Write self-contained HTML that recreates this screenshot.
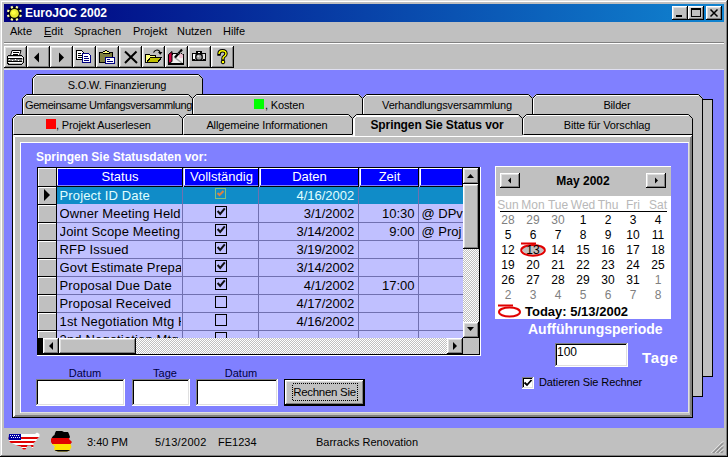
<!DOCTYPE html><html><head><meta charset="utf-8"><style>
html,body{margin:0;padding:0;width:728px;height:457px;overflow:hidden;background:#c0c0c0;}
body{position:relative;font-family:"Liberation Sans",sans-serif;}
.t{position:absolute;white-space:nowrap;}
svg{position:absolute;left:0;top:0;}
</style></head><body>
<div style="position:absolute;left:0px;top:0px;width:728px;height:457px;background:#c0c0c0;box-shadow: inset -1px -1px #000, inset 1px 1px #dfdfdf, inset -2px -2px #808080, inset 2px 2px #fff;"></div>
<div style="position:absolute;left:4px;top:4px;width:720px;height:18px;background:linear-gradient(to right,#000080 0%,#1084d0 100%);"></div>
<svg width="728" height="457" style="pointer-events:none">
<g transform="translate(14.4,13.4)"><circle r="7" fill="#000010"/><rect x="5.00" y="1.43" width="2.2" height="2.2" fill="#ffffa0" transform="rotate(22.5 6.10 2.53)"/><rect x="1.43" y="5.00" width="2.2" height="2.2" fill="#ffffa0" transform="rotate(67.5 2.53 6.10)"/><rect x="-3.63" y="5.00" width="2.2" height="2.2" fill="#ffffa0" transform="rotate(112.5 -2.53 6.10)"/><rect x="-7.20" y="1.43" width="2.2" height="2.2" fill="#ffffa0" transform="rotate(157.5 -6.10 2.53)"/><rect x="-7.20" y="-3.63" width="2.2" height="2.2" fill="#ffffa0" transform="rotate(202.5 -6.10 -2.53)"/><rect x="-3.63" y="-7.20" width="2.2" height="2.2" fill="#ffffa0" transform="rotate(247.5 -2.53 -6.10)"/><rect x="1.43" y="-7.20" width="2.2" height="2.2" fill="#ffffa0" transform="rotate(292.5 2.53 -6.10)"/><rect x="5.00" y="-3.63" width="2.2" height="2.2" fill="#ffffa0" transform="rotate(337.5 6.10 -2.53)"/><circle r="5" fill="#000"/><circle r="4.4" fill="#e8e830"/><circle cx="-0.8" cy="-0.8" r="2.2" fill="#ffff40"/></g></svg>
<div class="t" style="left:25px;top:5.84px;font-size:12px;line-height:14px;color:#fff;font-weight:700;">EuroJOC 2002</div>
<div style="position:absolute;left:672px;top:6px;width:16px;height:14px;background:#c0c0c0;box-shadow: inset -1px -1px #000, inset 1px 1px #fff, inset -2px -2px #808080, inset 2px 2px #dfdfdf;"></div>
<div style="position:absolute;left:688px;top:6px;width:16px;height:14px;background:#c0c0c0;box-shadow: inset -1px -1px #000, inset 1px 1px #fff, inset -2px -2px #808080, inset 2px 2px #dfdfdf;"></div>
<div style="position:absolute;left:706px;top:6px;width:16px;height:14px;background:#c0c0c0;box-shadow: inset -1px -1px #000, inset 1px 1px #fff, inset -2px -2px #808080, inset 2px 2px #dfdfdf;"></div>
<svg width="728" height="457">
<rect x="676" y="15" width="6" height="2" fill="#000"/>
<rect x="691.5" y="8.5" width="9" height="8" fill="none" stroke="#000"/>
<rect x="691" y="9" width="10" height="1" fill="#000"/>
<path d="M710.5 9.5 L717.5 16.5 M717.5 9.5 L710.5 16.5" stroke="#000" stroke-width="1.5"/>
</svg>
<div class="t" style="left:10px;top:24.69px;font-size:11px;line-height:13px;color:#000;">Akte</div>
<div class="t" style="left:44px;top:24.69px;font-size:11px;line-height:13px;color:#000;"><u>E</u>dit</div>
<div class="t" style="left:74px;top:24.69px;font-size:11px;line-height:13px;color:#000;">Sprachen</div>
<div class="t" style="left:133px;top:24.69px;font-size:11px;line-height:13px;color:#000;">Projekt</div>
<div class="t" style="left:177px;top:24.69px;font-size:11px;line-height:13px;color:#000;">Nutzen</div>
<div class="t" style="left:223px;top:24.69px;font-size:11px;line-height:13px;color:#000;">Hilfe</div>
<div style="position:absolute;left:4px;top:42px;width:720px;height:1px;background:#808080;"></div>
<div style="position:absolute;left:4px;top:43px;width:720px;height:1px;background:#fff;"></div>
<div style="position:absolute;left:4px;top:46px;width:23px;height:22px;background:#c0c0c0;box-shadow: inset -1px -1px #000, inset 1px 1px #fff, inset -2px -2px #808080, inset 2px 2px #dfdfdf;"></div>
<div style="position:absolute;left:27px;top:46px;width:23px;height:22px;background:#c0c0c0;box-shadow: inset -1px -1px #000, inset 1px 1px #fff, inset -2px -2px #808080, inset 2px 2px #dfdfdf;"></div>
<div style="position:absolute;left:50px;top:46px;width:23px;height:22px;background:#c0c0c0;box-shadow: inset -1px -1px #000, inset 1px 1px #fff, inset -2px -2px #808080, inset 2px 2px #dfdfdf;"></div>
<div style="position:absolute;left:73px;top:46px;width:23px;height:22px;background:#c0c0c0;box-shadow: inset -1px -1px #000, inset 1px 1px #fff, inset -2px -2px #808080, inset 2px 2px #dfdfdf;"></div>
<div style="position:absolute;left:96px;top:46px;width:23px;height:22px;background:#c0c0c0;box-shadow: inset -1px -1px #000, inset 1px 1px #fff, inset -2px -2px #808080, inset 2px 2px #dfdfdf;"></div>
<div style="position:absolute;left:119px;top:46px;width:23px;height:22px;background:#c0c0c0;box-shadow: inset -1px -1px #000, inset 1px 1px #fff, inset -2px -2px #808080, inset 2px 2px #dfdfdf;"></div>
<div style="position:absolute;left:142px;top:46px;width:23px;height:22px;background:#c0c0c0;box-shadow: inset -1px -1px #000, inset 1px 1px #fff, inset -2px -2px #808080, inset 2px 2px #dfdfdf;"></div>
<div style="position:absolute;left:165px;top:46px;width:23px;height:22px;background:#c0c0c0;box-shadow: inset -1px -1px #000, inset 1px 1px #fff, inset -2px -2px #808080, inset 2px 2px #dfdfdf;"></div>
<div style="position:absolute;left:188px;top:46px;width:23px;height:22px;background:#c0c0c0;box-shadow: inset -1px -1px #000, inset 1px 1px #fff, inset -2px -2px #808080, inset 2px 2px #dfdfdf;"></div>
<div style="position:absolute;left:211px;top:46px;width:23px;height:22px;background:#c0c0c0;box-shadow: inset -1px -1px #000, inset 1px 1px #fff, inset -2px -2px #808080, inset 2px 2px #dfdfdf;"></div>
<div style="position:absolute;left:4px;top:69px;width:720px;height:359px;background:#8080ff;box-shadow:inset 0 1px #e0e0f0;"></div>
<svg width="728" height="457" shape-rendering="crispEdges">
<!-- printer -->
<g>
<path d="M12 50.5 h9 l-1.5 5 h-9 z" fill="#fff" stroke="#000" shape-rendering="auto"/>
<rect x="13" y="52" width="6" height="1" fill="#000"/>
<rect x="12.5" y="54" width="5.5" height="1" fill="#000"/>
<path d="M8.5 55.5 h13 l1.5 1.5 v6 l-1 1 h-13.5 l-1.5 -1.5 v-5.5 z" fill="#c0c0c0" stroke="#000"/>
<rect x="8" y="57" width="14" height="1" fill="#fff"/>
<rect x="8" y="58" width="14" height="1" fill="#000"/>
<rect x="8" y="59" width="14" height="2" fill="#808080"/>
<rect x="9" y="59" width="1" height="1" fill="#fff"/><rect x="12" y="60" width="1" height="1" fill="#fff"/><rect x="15" y="59" width="1" height="1" fill="#fff"/><rect x="18" y="60" width="1" height="1" fill="#fff"/>
<rect x="8" y="61" width="14" height="1" fill="#000"/>
<rect x="8" y="62" width="14" height="1" fill="#fff"/>
<rect x="22" y="57" width="1" height="1" fill="#fff"/><rect x="22" y="60" width="1" height="1" fill="#fff"/>
</g>
<!-- left arrow -->
<path d="M34 57.5 L39 52.5 L39 62.5 Z" fill="#000" shape-rendering="auto"/>
<!-- right arrow -->
<path d="M64 57.5 L59 52.5 L59 62.5 Z" fill="#000" shape-rendering="auto"/>
<!-- copy -->
<path d="M76.5 50.5 h5 l2 2 v7 h-7 z" fill="#fff" stroke="#000"/>
<rect x="78" y="53" width="3" height="1" fill="#000"/><rect x="78" y="55" width="4" height="1" fill="#000"/><rect x="78" y="57" width="4" height="1" fill="#000"/>
<path d="M82.5 53.5 h6 l2 2 v7 h-8 z" fill="#fff" stroke="#000080"/>
<rect x="84" y="56" width="4" height="1" fill="#000080"/><rect x="84" y="58" width="5" height="1" fill="#000080"/><rect x="84" y="60" width="5" height="1" fill="#000080"/>
<!-- paste -->
<rect x="99.5" y="52.5" width="13" height="10" fill="#808040" stroke="#000"/>
<path d="M103.5 53.5 h6 v-1 l-1 -1 h-1 l-1 -1 h-1 l-1 1 h-1 l-1 1 z" fill="#ffff80" stroke="#000"/>
<rect x="105.5" y="57.5" width="9" height="6" fill="#fff" stroke="#000080"/>
<rect x="107" y="59" width="3" height="1" fill="#000080"/><rect x="107" y="61" width="6" height="1" fill="#000080"/>
<!-- delete X -->
<path d="M125 51.5 L137 63 M136.5 51.5 L125 63" stroke="#000" stroke-width="2" shape-rendering="auto"/>
<!-- open folder -->
<path d="M145.5 54.5 h4 l1 1 h5 v2 h-5 l-4 5 h-1 z" fill="#ffff80" stroke="#000"/>
<path d="M146.5 62.5 l4 -5 h11 l-4 5 z" fill="#c0c000" stroke="#000"/>
<path d="M153.5 52.5 q1.5 -2.5 3.5 -2.5 q2.5 0 3 2.5" fill="none" stroke="#000" stroke-width="1.2" shape-rendering="auto"/>
<path d="M158 52 h4.5 l-2.3 2.8 z" fill="#000" shape-rendering="auto"/>
<!-- red book/pen -->
<path d="M172.5 53.5 h4 l1 1 h3 l1 -1 l2 1.5 v9 h-14 z" fill="#f0f0f0" stroke="#000"/>
<path d="M174 57 L182 63" stroke="#a0a0a0" stroke-width="1.5" shape-rendering="auto"/>
<rect x="168" y="63" width="16" height="2" fill="#000"/>
<path d="M168.5 54.5 l3.5 -3 v10 l-3.5 2 z" fill="#d00040" stroke="#000" shape-rendering="auto"/>
<circle cx="181" cy="56" r="2.2" fill="#f0c0d0" shape-rendering="auto"/>
<path d="M175 57.5 L182 49.5" stroke="#000" stroke-width="2.2" shape-rendering="auto"/>
<path d="M178.5 53.5 l1 1 M180 51.8 l1 1" stroke="#c0c0c0" stroke-width="0.8" shape-rendering="auto"/>
<!-- camera -->
<rect x="192" y="53" width="14" height="8" rx="1" fill="#000"/>
<rect x="196" y="51" width="6" height="3" fill="#000"/>
<rect x="198" y="52" width="2" height="1" fill="#fff"/>
<rect x="193" y="54" width="2" height="5" fill="#fff"/>
<rect x="203" y="54" width="2" height="5" fill="#e0e0e0"/>
<rect x="195" y="54" width="8" height="6" fill="#808080"/>
<circle cx="199" cy="57" r="3.2" fill="#a0a0a0" stroke="#000" stroke-width="1.2" shape-rendering="auto"/>
<circle cx="198.3" cy="56.3" r="1" fill="#e0e0e0" shape-rendering="auto"/>
<!-- question -->
<path d="M219 54 q0 -3.2 3.5 -3.2 q3.5 0 3.5 3 q0 1.8 -2 2.8 q-1 .6 -1 1.8 v1" fill="none" stroke="#000" stroke-width="3.4" stroke-linecap="square" shape-rendering="auto"/>
<path d="M219 54 q0 -3.2 3.5 -3.2 q3.5 0 3.5 3 q0 1.8 -2 2.8 q-1 .6 -1 1.8 v1" fill="none" stroke="#ffff00" stroke-width="1.4" stroke-linecap="butt" shape-rendering="auto"/>
<circle cx="223" cy="62" r="1.8" fill="#ffff00" stroke="#000" stroke-width="1" shape-rendering="auto"/>
</svg>
<svg width="728" height="457">
<rect x="702.5" y="99.5" width="10" height="277" fill="#c0c0c0" stroke="#000"/>
<rect x="692.5" y="114.5" width="10" height="282" fill="#c0c0c0" stroke="#000"/>
<path d="M32 98 V78 L36 74 H199 L203 78 V98 Z" fill="#c0c0c0"/>
<path d="M32.5 98.5 V78.5 L36.5 74.5 H198.5 L202.5 78.5 V98.5" fill="none" stroke="#000"/>
<path d="M33.5 98.5 V78.5 L36.5 75.5 H198.5" fill="none" stroke="#fff"/>
<path d="M22 118 V98 L26 94 H189 L193 98 V118 Z" fill="#c0c0c0"/>
<path d="M22.5 118.5 V98.5 L26.5 94.5 H188.5 L192.5 98.5 V118.5" fill="none" stroke="#000"/>
<path d="M23.5 118.5 V98.5 L26.5 95.5 H188.5" fill="none" stroke="#fff"/>
<path d="M192 118 V98 L196 94 H359 L363 98 V118 Z" fill="#c0c0c0"/>
<path d="M192.5 118.5 V98.5 L196.5 94.5 H358.5 L362.5 98.5 V118.5" fill="none" stroke="#000"/>
<path d="M193.5 118.5 V98.5 L196.5 95.5 H358.5" fill="none" stroke="#fff"/>
<path d="M362 118 V98 L366 94 H529 L533 98 V118 Z" fill="#c0c0c0"/>
<path d="M362.5 118.5 V98.5 L366.5 94.5 H528.5 L532.5 98.5 V118.5" fill="none" stroke="#000"/>
<path d="M363.5 118.5 V98.5 L366.5 95.5 H528.5" fill="none" stroke="#fff"/>
<path d="M532 118 V98 L536 94 H699 L703 98 V118 Z" fill="#c0c0c0"/>
<path d="M532.5 118.5 V98.5 L536.5 94.5 H698.5 L702.5 98.5 V118.5" fill="none" stroke="#000"/>
<path d="M533.5 118.5 V98.5 L536.5 95.5 H698.5" fill="none" stroke="#fff"/>
<rect x="12.5" y="134.5" width="680" height="283" fill="#c0c0c0" stroke="#000"/>
<path d="M13.5 417 V135.5 H692 M14.5 417 V136.5 H692" stroke="#fff" fill="none"/>
<path d="M690.5 137 V415.5 H15 M691.5 136 V416.5 H14" stroke="#808080" fill="none"/>
<path d="M12 134 V118 L16 114 H179 L183 118 V134 Z" fill="#c0c0c0"/>
<path d="M12.5 134.5 V118.5 L16.5 114.5 H178.5 L182.5 118.5 V134.5" fill="none" stroke="#000"/>
<path d="M13.5 134.5 V118.5 L16.5 115.5 H178.5" fill="none" stroke="#fff"/>
<path d="M182 134 V118 L186 114 H349 L353 118 V134 Z" fill="#c0c0c0"/>
<path d="M182.5 134.5 V118.5 L186.5 114.5 H348.5 L352.5 118.5 V134.5" fill="none" stroke="#000"/>
<path d="M183.5 134.5 V118.5 L186.5 115.5 H348.5" fill="none" stroke="#fff"/>
<path d="M522 134 V118 L526 114 H689 L693 118 V134 Z" fill="#c0c0c0"/>
<path d="M522.5 134.5 V118.5 L526.5 114.5 H688.5 L692.5 118.5 V134.5" fill="none" stroke="#000"/>
<path d="M523.5 134.5 V118.5 L526.5 115.5 H688.5" fill="none" stroke="#fff"/>
<path d="M352.5 136 V118.5 L356.5 114.5 H518.5 L522.5 118.5 V136 Z" fill="#c0c0c0"/>
<path d="M352.5 134 V118.5 L356.5 114.5 H518.5 L522.5 118.5 V134.5" fill="none" stroke="#000"/>
<path d="M353.5 137 V118.5 L356.5 115.5 H518.5 M354.5 137 V118.5 L356.5 116.5 H518.5" fill="none" stroke="#fff"/>
<rect x="20.5" y="142.5" width="668" height="270" fill="#8080ff" stroke="#fff"/>
<path d="M688.5 143 V412.5 H21" stroke="#e0e0e0" fill="none"/>
</svg>
<div class="t" style="left:32px;top:78.69px;font-size:11px;line-height:13px;color:#000;letter-spacing:-0.15px;width:170px;text-align:center;">S.O.W. Finanzierung</div>
<div class="t" style="left:25px;top:98.69px;font-size:11px;line-height:13px;color:#000;letter-spacing:-0.4px;width:167px;overflow:hidden;">Gemeinsame Umfangsversammlung</div>
<div class="t" style="left:265px;top:98.69px;font-size:11px;line-height:13px;color:#000;letter-spacing:-0.15px;">, Kosten</div>
<div style="position:absolute;left:254px;top:99px;width:10px;height:10px;background:#00ff00;"></div>
<div class="t" style="left:362px;top:98.69px;font-size:11px;line-height:13px;color:#000;letter-spacing:-0.15px;width:170px;text-align:center;">Verhandlungsversammlung</div>
<div class="t" style="left:532px;top:98.69px;font-size:11px;line-height:13px;color:#000;letter-spacing:-0.15px;width:170px;text-align:center;">Bilder</div>
<div style="position:absolute;left:46px;top:119px;width:10px;height:10px;background:#ff0000;"></div>
<div class="t" style="left:56px;top:118.69px;font-size:11px;line-height:13px;color:#000;letter-spacing:-0.15px;">, Projekt Auserlesen</div>
<div class="t" style="left:182px;top:118.69px;font-size:11px;line-height:13px;color:#000;letter-spacing:-0.15px;width:170px;text-align:center;">Allgemeine Informationen</div>
<div class="t" style="left:352px;top:117.84px;font-size:12px;line-height:14px;color:#000;font-weight:700;letter-spacing:-0.1px;width:170px;text-align:center;">Springen Sie Status vor</div>
<div class="t" style="left:522px;top:118.69px;font-size:11px;line-height:13px;color:#000;letter-spacing:-0.15px;width:170px;text-align:center;">Bitte für Vorschlag</div>
<div class="t" style="left:36px;top:149.84px;font-size:12px;line-height:14px;color:#fff;font-weight:700;">Springen Sie Statusdaten vor:</div>
<svg width="728" height="457" shape-rendering="crispEdges">
<rect x="37" y="167" width="443" height="188" fill="#000"/>
<rect x="37" y="355" width="444" height="1" fill="#fff"/>
<rect x="480" y="167" width="1" height="189" fill="#fff"/>
<rect x="38" y="168" width="425" height="170" fill="#c0c0ff"/>
<rect x="57" y="187" width="406" height="17" fill="#108cc8"/>
<rect x="38" y="187" width="18" height="18" fill="#c0c0c0"/>
<rect x="38" y="187" width="18" height="1" fill="#fff"/>
<rect x="38" y="187" width="1" height="18" fill="#fff"/>
<rect x="38" y="204" width="18" height="1" fill="#000"/>
<rect x="38" y="205" width="18" height="18" fill="#c0c0c0"/>
<rect x="38" y="205" width="18" height="1" fill="#fff"/>
<rect x="38" y="205" width="1" height="18" fill="#fff"/>
<rect x="38" y="222" width="18" height="1" fill="#000"/>
<rect x="56" y="222" width="407" height="1" fill="#7070b0"/>
<rect x="38" y="223" width="18" height="18" fill="#c0c0c0"/>
<rect x="38" y="223" width="18" height="1" fill="#fff"/>
<rect x="38" y="223" width="1" height="18" fill="#fff"/>
<rect x="38" y="240" width="18" height="1" fill="#000"/>
<rect x="56" y="240" width="407" height="1" fill="#7070b0"/>
<rect x="38" y="241" width="18" height="18" fill="#c0c0c0"/>
<rect x="38" y="241" width="18" height="1" fill="#fff"/>
<rect x="38" y="241" width="1" height="18" fill="#fff"/>
<rect x="38" y="258" width="18" height="1" fill="#000"/>
<rect x="56" y="258" width="407" height="1" fill="#7070b0"/>
<rect x="38" y="259" width="18" height="18" fill="#c0c0c0"/>
<rect x="38" y="259" width="18" height="1" fill="#fff"/>
<rect x="38" y="259" width="1" height="18" fill="#fff"/>
<rect x="38" y="276" width="18" height="1" fill="#000"/>
<rect x="56" y="276" width="407" height="1" fill="#7070b0"/>
<rect x="38" y="277" width="18" height="18" fill="#c0c0c0"/>
<rect x="38" y="277" width="18" height="1" fill="#fff"/>
<rect x="38" y="277" width="1" height="18" fill="#fff"/>
<rect x="38" y="294" width="18" height="1" fill="#000"/>
<rect x="56" y="294" width="407" height="1" fill="#7070b0"/>
<rect x="38" y="295" width="18" height="18" fill="#c0c0c0"/>
<rect x="38" y="295" width="18" height="1" fill="#fff"/>
<rect x="38" y="295" width="1" height="18" fill="#fff"/>
<rect x="38" y="312" width="18" height="1" fill="#000"/>
<rect x="56" y="312" width="407" height="1" fill="#7070b0"/>
<rect x="38" y="313" width="18" height="18" fill="#c0c0c0"/>
<rect x="38" y="313" width="18" height="1" fill="#fff"/>
<rect x="38" y="313" width="1" height="18" fill="#fff"/>
<rect x="38" y="330" width="18" height="1" fill="#000"/>
<rect x="56" y="330" width="407" height="1" fill="#7070b0"/>
<rect x="38" y="331" width="18" height="7" fill="#c0c0c0"/>
<rect x="38" y="331" width="18" height="1" fill="#fff"/>
<rect x="38" y="331" width="1" height="7" fill="#fff"/>
<rect x="38" y="348" width="18" height="1" fill="#000"/>
<rect x="56" y="348" width="407" height="1" fill="#7070b0"/>
<rect x="56" y="168" width="1" height="170" fill="#000"/>
<rect x="182" y="187" width="1" height="151" fill="#7070b0"/>
<rect x="258" y="187" width="1" height="151" fill="#7070b0"/>
<rect x="358" y="187" width="1" height="151" fill="#7070b0"/>
<rect x="418" y="187" width="1" height="151" fill="#7070b0"/>
<rect x="38" y="168" width="18" height="19" fill="#c0c0c0"/>
<rect x="38" y="168" width="18" height="1" fill="#fff"/>
<rect x="38" y="168" width="1" height="19" fill="#fff"/>
<rect x="38" y="186" width="18" height="1" fill="#000"/>
<rect x="57" y="168" width="126" height="19" fill="#0000ff"/>
<rect x="57" y="168" width="126" height="1" fill="#fff"/>
<rect x="57" y="168" width="1" height="19" fill="#fff"/>
<rect x="182" y="168" width="1" height="19" fill="#000"/>
<rect x="57" y="186" width="126" height="1" fill="#000"/>
<rect x="57" y="185" width="125" height="1" fill="#8080ff"/>
<rect x="184" y="168" width="75" height="19" fill="#0000ff"/>
<rect x="184" y="168" width="75" height="1" fill="#fff"/>
<rect x="184" y="168" width="1" height="19" fill="#fff"/>
<rect x="258" y="168" width="1" height="19" fill="#000"/>
<rect x="184" y="186" width="75" height="1" fill="#000"/>
<rect x="184" y="185" width="74" height="1" fill="#8080ff"/>
<rect x="260" y="168" width="99" height="19" fill="#0000ff"/>
<rect x="260" y="168" width="99" height="1" fill="#fff"/>
<rect x="260" y="168" width="1" height="19" fill="#fff"/>
<rect x="358" y="168" width="1" height="19" fill="#000"/>
<rect x="260" y="186" width="99" height="1" fill="#000"/>
<rect x="260" y="185" width="98" height="1" fill="#8080ff"/>
<rect x="360" y="168" width="59" height="19" fill="#0000ff"/>
<rect x="360" y="168" width="59" height="1" fill="#fff"/>
<rect x="360" y="168" width="1" height="19" fill="#fff"/>
<rect x="418" y="168" width="1" height="19" fill="#000"/>
<rect x="360" y="186" width="59" height="1" fill="#000"/>
<rect x="360" y="185" width="58" height="1" fill="#8080ff"/>
<rect x="420" y="168" width="43" height="19" fill="#0000ff"/>
<rect x="420" y="168" width="43" height="1" fill="#fff"/>
<rect x="420" y="168" width="1" height="19" fill="#fff"/>
<rect x="462" y="168" width="1" height="19" fill="#000"/>
<rect x="420" y="186" width="43" height="1" fill="#000"/>
<rect x="420" y="185" width="42" height="1" fill="#8080ff"/>
<path d="M44 189 L44 201 L50 195 Z" fill="#000" shape-rendering="auto"/>
<rect x="215.5" y="188.5" width="10" height="10" fill="none" stroke="#80c080"/>
<path d="M217.5 193 l2 2 l4 -4" fill="none" stroke="#e08040" stroke-width="2" shape-rendering="auto"/>
<rect x="215.5" y="206.5" width="11" height="11" fill="#fff" stroke="#000"/>
<rect x="216" y="207" width="10" height="10" fill="#c0c0ff"/>
<path d="M217.6 211 l2.6 3 l4.6 -5.6" fill="none" stroke="#101010" stroke-width="2" shape-rendering="auto"/>
<rect x="215.5" y="224.5" width="11" height="11" fill="#fff" stroke="#000"/>
<rect x="216" y="225" width="10" height="10" fill="#c0c0ff"/>
<path d="M217.6 229 l2.6 3 l4.6 -5.6" fill="none" stroke="#101010" stroke-width="2" shape-rendering="auto"/>
<rect x="215.5" y="242.5" width="11" height="11" fill="#fff" stroke="#000"/>
<rect x="216" y="243" width="10" height="10" fill="#c0c0ff"/>
<path d="M217.6 247 l2.6 3 l4.6 -5.6" fill="none" stroke="#101010" stroke-width="2" shape-rendering="auto"/>
<rect x="215.5" y="260.5" width="11" height="11" fill="#fff" stroke="#000"/>
<rect x="216" y="261" width="10" height="10" fill="#c0c0ff"/>
<path d="M217.6 265 l2.6 3 l4.6 -5.6" fill="none" stroke="#101010" stroke-width="2" shape-rendering="auto"/>
<rect x="215.5" y="278.5" width="11" height="11" fill="#fff" stroke="#000"/>
<rect x="216" y="279" width="10" height="10" fill="#c0c0ff"/>
<path d="M217.6 283 l2.6 3 l4.6 -5.6" fill="none" stroke="#101010" stroke-width="2" shape-rendering="auto"/>
<rect x="215.5" y="296.5" width="11" height="11" fill="#fff" stroke="#000"/>
<rect x="216" y="297" width="10" height="10" fill="#c0c0ff"/>
<rect x="215.5" y="314.5" width="11" height="11" fill="#fff" stroke="#000"/>
<rect x="216" y="315" width="10" height="10" fill="#c0c0ff"/>
<rect x="215.5" y="332.5" width="11" height="11" fill="none" stroke="#000"/>
<rect x="463" y="168" width="16" height="170" fill="url(#dither)"/>
<rect x="37" y="338" width="426" height="16" fill="url(#dither)"/>
<rect x="463" y="338" width="16" height="16" fill="#c0c0c0"/>
<defs><pattern id="dither" width="2" height="2" patternUnits="userSpaceOnUse"><rect width="2" height="2" fill="#c0c0c0"/><rect width="1" height="1" fill="#fff"/><rect x="1" y="1" width="1" height="1" fill="#fff"/></pattern></defs>
<rect x="463" y="168" width="16" height="16" fill="#000"/>
<rect x="463" y="168" width="15" height="15" fill="#fff"/>
<rect x="464" y="169" width="14" height="14" fill="#808080"/>
<rect x="464" y="169" width="13" height="13" fill="#dfdfdf"/>
<rect x="465" y="170" width="12" height="12" fill="#c0c0c0"/>
<rect x="463" y="184" width="16" height="65" fill="#000"/>
<rect x="463" y="184" width="15" height="64" fill="#fff"/>
<rect x="464" y="185" width="14" height="63" fill="#808080"/>
<rect x="464" y="185" width="13" height="62" fill="#dfdfdf"/>
<rect x="465" y="186" width="12" height="61" fill="#c0c0c0"/>
<rect x="463" y="322" width="16" height="16" fill="#000"/>
<rect x="463" y="322" width="15" height="15" fill="#fff"/>
<rect x="464" y="323" width="14" height="14" fill="#808080"/>
<rect x="464" y="323" width="13" height="13" fill="#dfdfdf"/>
<rect x="465" y="324" width="12" height="12" fill="#c0c0c0"/>
<rect x="37" y="338" width="6" height="16" fill="#000"/>
<rect x="43" y="338" width="16" height="16" fill="#000"/>
<rect x="43" y="338" width="15" height="15" fill="#fff"/>
<rect x="44" y="339" width="14" height="14" fill="#808080"/>
<rect x="44" y="339" width="13" height="13" fill="#dfdfdf"/>
<rect x="45" y="340" width="12" height="12" fill="#c0c0c0"/>
<rect x="59" y="338" width="77" height="16" fill="#000"/>
<rect x="59" y="338" width="76" height="15" fill="#fff"/>
<rect x="60" y="339" width="75" height="14" fill="#808080"/>
<rect x="60" y="339" width="74" height="13" fill="#dfdfdf"/>
<rect x="61" y="340" width="73" height="12" fill="#c0c0c0"/>
<rect x="447" y="338" width="16" height="16" fill="#000"/>
<rect x="447" y="338" width="15" height="15" fill="#fff"/>
<rect x="448" y="339" width="14" height="14" fill="#808080"/>
<rect x="448" y="339" width="13" height="13" fill="#dfdfdf"/>
<rect x="449" y="340" width="12" height="12" fill="#c0c0c0"/>
<path d="M467 178 h7 l-3.5 -4 z" fill="#000" shape-rendering="auto"/>
<path d="M467 327 h7 l-3.5 4 z" fill="#000" shape-rendering="auto"/>
<path d="M49 346 l4 -4 v8 z" fill="#000" shape-rendering="auto"/>
<path d="M457 346 l-4 -4 v8 z" fill="#000" shape-rendering="auto"/>
</svg>
<div class="t" style="left:57px;top:169.00px;font-size:13px;line-height:15px;color:#fff;width:126px;text-align:center;">Status</div>
<div class="t" style="left:184px;top:169.00px;font-size:13px;line-height:15px;color:#fff;width:75px;text-align:center;">Vollständig</div>
<div class="t" style="left:260px;top:169.00px;font-size:13px;line-height:15px;color:#fff;width:99px;text-align:center;">Daten</div>
<div class="t" style="left:360px;top:169.00px;font-size:13px;line-height:15px;color:#fff;width:59px;text-align:center;">Zeit</div>
<div style="position:absolute;left:57px;top:186px;width:407px;height:152px;overflow:hidden">
<div class="t" style="left:2.5px;top:1.50px;font-size:13px;line-height:15px;color:#e0ffff;letter-spacing:0.15px;width:121px;overflow:hidden;">Project ID Date</div>
<div class="t" style="left:197px;top:1.50px;font-size:13px;line-height:15px;color:#e0ffff;width:100.3px;text-align:right;">4/16/2002</div>
<div class="t" style="left:297px;top:1.50px;font-size:13px;line-height:15px;color:#e0ffff;width:60.5px;text-align:right;"></div>
<div class="t" style="left:364.5px;top:1.50px;font-size:13px;line-height:15px;color:#e0ffff;width:42px;overflow:hidden;"></div>
<div class="t" style="left:2.5px;top:19.50px;font-size:13px;line-height:15px;color:#000;letter-spacing:0.15px;width:121px;overflow:hidden;">Owner Meeting Held</div>
<div class="t" style="left:197px;top:19.50px;font-size:13px;line-height:15px;color:#000;width:100.3px;text-align:right;">3/1/2002</div>
<div class="t" style="left:297px;top:19.50px;font-size:13px;line-height:15px;color:#000;width:60.5px;text-align:right;">10:30</div>
<div class="t" style="left:364.5px;top:19.50px;font-size:13px;line-height:15px;color:#000;width:42px;overflow:hidden;">@ DPv</div>
<div class="t" style="left:2.5px;top:37.50px;font-size:13px;line-height:15px;color:#000;letter-spacing:0.15px;width:121px;overflow:hidden;">Joint Scope Meeting</div>
<div class="t" style="left:197px;top:37.50px;font-size:13px;line-height:15px;color:#000;width:100.3px;text-align:right;">3/14/2002</div>
<div class="t" style="left:297px;top:37.50px;font-size:13px;line-height:15px;color:#000;width:60.5px;text-align:right;">9:00</div>
<div class="t" style="left:364.5px;top:37.50px;font-size:13px;line-height:15px;color:#000;width:42px;overflow:hidden;">@ Proj</div>
<div class="t" style="left:2.5px;top:55.50px;font-size:13px;line-height:15px;color:#000;letter-spacing:0.15px;width:121px;overflow:hidden;">RFP Issued</div>
<div class="t" style="left:197px;top:55.50px;font-size:13px;line-height:15px;color:#000;width:100.3px;text-align:right;">3/19/2002</div>
<div class="t" style="left:297px;top:55.50px;font-size:13px;line-height:15px;color:#000;width:60.5px;text-align:right;"></div>
<div class="t" style="left:364.5px;top:55.50px;font-size:13px;line-height:15px;color:#000;width:42px;overflow:hidden;"></div>
<div class="t" style="left:2.5px;top:73.50px;font-size:13px;line-height:15px;color:#000;letter-spacing:0.15px;width:121px;overflow:hidden;">Govt Estimate Prepared</div>
<div class="t" style="left:197px;top:73.50px;font-size:13px;line-height:15px;color:#000;width:100.3px;text-align:right;">3/14/2002</div>
<div class="t" style="left:297px;top:73.50px;font-size:13px;line-height:15px;color:#000;width:60.5px;text-align:right;"></div>
<div class="t" style="left:364.5px;top:73.50px;font-size:13px;line-height:15px;color:#000;width:42px;overflow:hidden;"></div>
<div class="t" style="left:2.5px;top:91.50px;font-size:13px;line-height:15px;color:#000;letter-spacing:0.15px;width:121px;overflow:hidden;">Proposal Due Date</div>
<div class="t" style="left:197px;top:91.50px;font-size:13px;line-height:15px;color:#000;width:100.3px;text-align:right;">4/1/2002</div>
<div class="t" style="left:297px;top:91.50px;font-size:13px;line-height:15px;color:#000;width:60.5px;text-align:right;">17:00</div>
<div class="t" style="left:364.5px;top:91.50px;font-size:13px;line-height:15px;color:#000;width:42px;overflow:hidden;"></div>
<div class="t" style="left:2.5px;top:109.50px;font-size:13px;line-height:15px;color:#000;letter-spacing:0.15px;width:121px;overflow:hidden;">Proposal Received</div>
<div class="t" style="left:197px;top:109.50px;font-size:13px;line-height:15px;color:#000;width:100.3px;text-align:right;">4/17/2002</div>
<div class="t" style="left:297px;top:109.50px;font-size:13px;line-height:15px;color:#000;width:60.5px;text-align:right;"></div>
<div class="t" style="left:364.5px;top:109.50px;font-size:13px;line-height:15px;color:#000;width:42px;overflow:hidden;"></div>
<div class="t" style="left:2.5px;top:127.50px;font-size:13px;line-height:15px;color:#000;letter-spacing:0.15px;width:121px;overflow:hidden;">1st Negotiation Mtg Held</div>
<div class="t" style="left:197px;top:127.50px;font-size:13px;line-height:15px;color:#000;width:100.3px;text-align:right;">4/16/2002</div>
<div class="t" style="left:297px;top:127.50px;font-size:13px;line-height:15px;color:#000;width:60.5px;text-align:right;"></div>
<div class="t" style="left:364.5px;top:127.50px;font-size:13px;line-height:15px;color:#000;width:42px;overflow:hidden;"></div>
<div class="t" style="left:2.5px;top:145.50px;font-size:13px;line-height:15px;color:#000;letter-spacing:0.15px;width:121px;overflow:hidden;">2nd Negotiation Mtg Held</div>
<div class="t" style="left:197px;top:145.50px;font-size:13px;line-height:15px;color:#000;width:100.3px;text-align:right;"></div>
<div class="t" style="left:297px;top:145.50px;font-size:13px;line-height:15px;color:#000;width:60.5px;text-align:right;"></div>
<div class="t" style="left:364.5px;top:145.50px;font-size:13px;line-height:15px;color:#000;width:42px;overflow:hidden;"></div>
</div>
<div style="position:absolute;left:495px;top:166px;width:176px;height:153px;background:#fff;"></div>
<div style="position:absolute;left:496px;top:167px;width:175px;height:29px;background:#c0c0c0;"></div>
<div style="position:absolute;left:500px;top:173px;width:20px;height:15px;background:#c0c0c0;box-shadow: inset -1px -1px #000, inset 1px 1px #fff, inset -2px -2px #808080, inset 2px 2px #dfdfdf;"></div>
<div style="position:absolute;left:646px;top:173px;width:20px;height:15px;background:#c0c0c0;box-shadow: inset -1px -1px #000, inset 1px 1px #fff, inset -2px -2px #808080, inset 2px 2px #dfdfdf;"></div>
<svg width="728" height="457">
<path d="M508 180.5 l3 -3 v6 z" fill="#000"/>
<path d="M658 180.5 l-3 -3 v6 z" fill="#000"/>
<rect x="500" y="211" width="167" height="1" fill="#000"/>
<ellipse cx="533" cy="250" rx="10.5" ry="4.8" fill="#c0c0c0"/>
<ellipse cx="533" cy="250.3" rx="11.8" ry="5.4" fill="none" stroke="#e00000" stroke-width="2"/>
<path d="M521 243.5 H536" stroke="#e00000" stroke-width="2"/>
<ellipse cx="509.5" cy="312" rx="10.5" ry="4.6" fill="none" stroke="#e00000" stroke-width="2"/>
<path d="M498 305.5 H513" stroke="#e00000" stroke-width="2"/>
</svg>
<div class="t" style="left:543px;top:173.84px;font-size:12px;line-height:14px;color:#000;font-weight:700;width:80px;text-align:center;">May 2002</div>
<div class="t" style="left:488px;top:197.84px;font-size:12px;line-height:14px;color:#b8b8b8;width:40px;text-align:center;">Sun</div>
<div class="t" style="left:513px;top:197.84px;font-size:12px;line-height:14px;color:#b8b8b8;width:40px;text-align:center;">Mon</div>
<div class="t" style="left:538px;top:197.84px;font-size:12px;line-height:14px;color:#b8b8b8;width:40px;text-align:center;">Tue</div>
<div class="t" style="left:563px;top:197.84px;font-size:12px;line-height:14px;color:#b8b8b8;width:40px;text-align:center;">Wed</div>
<div class="t" style="left:588px;top:197.84px;font-size:12px;line-height:14px;color:#b8b8b8;width:40px;text-align:center;">Thu</div>
<div class="t" style="left:613px;top:197.84px;font-size:12px;line-height:14px;color:#b8b8b8;width:40px;text-align:center;">Fri</div>
<div class="t" style="left:638px;top:197.84px;font-size:12px;line-height:14px;color:#b8b8b8;width:40px;text-align:center;">Sat</div>
<div class="t" style="left:488px;top:212.84px;font-size:12px;line-height:14px;color:#808080;width:40px;text-align:center;">28</div>
<div class="t" style="left:513px;top:212.84px;font-size:12px;line-height:14px;color:#808080;width:40px;text-align:center;">29</div>
<div class="t" style="left:538px;top:212.84px;font-size:12px;line-height:14px;color:#808080;width:40px;text-align:center;">30</div>
<div class="t" style="left:563px;top:212.84px;font-size:12px;line-height:14px;color:#000;width:40px;text-align:center;">1</div>
<div class="t" style="left:588px;top:212.84px;font-size:12px;line-height:14px;color:#000;width:40px;text-align:center;">2</div>
<div class="t" style="left:613px;top:212.84px;font-size:12px;line-height:14px;color:#000;width:40px;text-align:center;">3</div>
<div class="t" style="left:638px;top:212.84px;font-size:12px;line-height:14px;color:#000;width:40px;text-align:center;">4</div>
<div class="t" style="left:488px;top:227.84px;font-size:12px;line-height:14px;color:#000;width:40px;text-align:center;">5</div>
<div class="t" style="left:513px;top:227.84px;font-size:12px;line-height:14px;color:#000;width:40px;text-align:center;">6</div>
<div class="t" style="left:538px;top:227.84px;font-size:12px;line-height:14px;color:#000;width:40px;text-align:center;">7</div>
<div class="t" style="left:563px;top:227.84px;font-size:12px;line-height:14px;color:#000;width:40px;text-align:center;">8</div>
<div class="t" style="left:588px;top:227.84px;font-size:12px;line-height:14px;color:#000;width:40px;text-align:center;">9</div>
<div class="t" style="left:613px;top:227.84px;font-size:12px;line-height:14px;color:#000;width:40px;text-align:center;">10</div>
<div class="t" style="left:638px;top:227.84px;font-size:12px;line-height:14px;color:#000;width:40px;text-align:center;">11</div>
<div class="t" style="left:488px;top:242.84px;font-size:12px;line-height:14px;color:#000;width:40px;text-align:center;">12</div>
<div class="t" style="left:513px;top:242.84px;font-size:12px;line-height:14px;color:#000;width:40px;text-align:center;">13</div>
<div class="t" style="left:538px;top:242.84px;font-size:12px;line-height:14px;color:#000;width:40px;text-align:center;">14</div>
<div class="t" style="left:563px;top:242.84px;font-size:12px;line-height:14px;color:#000;width:40px;text-align:center;">15</div>
<div class="t" style="left:588px;top:242.84px;font-size:12px;line-height:14px;color:#000;width:40px;text-align:center;">16</div>
<div class="t" style="left:613px;top:242.84px;font-size:12px;line-height:14px;color:#000;width:40px;text-align:center;">17</div>
<div class="t" style="left:638px;top:242.84px;font-size:12px;line-height:14px;color:#000;width:40px;text-align:center;">18</div>
<div class="t" style="left:488px;top:257.84px;font-size:12px;line-height:14px;color:#000;width:40px;text-align:center;">19</div>
<div class="t" style="left:513px;top:257.84px;font-size:12px;line-height:14px;color:#000;width:40px;text-align:center;">20</div>
<div class="t" style="left:538px;top:257.84px;font-size:12px;line-height:14px;color:#000;width:40px;text-align:center;">21</div>
<div class="t" style="left:563px;top:257.84px;font-size:12px;line-height:14px;color:#000;width:40px;text-align:center;">22</div>
<div class="t" style="left:588px;top:257.84px;font-size:12px;line-height:14px;color:#000;width:40px;text-align:center;">23</div>
<div class="t" style="left:613px;top:257.84px;font-size:12px;line-height:14px;color:#000;width:40px;text-align:center;">24</div>
<div class="t" style="left:638px;top:257.84px;font-size:12px;line-height:14px;color:#000;width:40px;text-align:center;">25</div>
<div class="t" style="left:488px;top:272.84px;font-size:12px;line-height:14px;color:#000;width:40px;text-align:center;">26</div>
<div class="t" style="left:513px;top:272.84px;font-size:12px;line-height:14px;color:#000;width:40px;text-align:center;">27</div>
<div class="t" style="left:538px;top:272.84px;font-size:12px;line-height:14px;color:#000;width:40px;text-align:center;">28</div>
<div class="t" style="left:563px;top:272.84px;font-size:12px;line-height:14px;color:#000;width:40px;text-align:center;">29</div>
<div class="t" style="left:588px;top:272.84px;font-size:12px;line-height:14px;color:#000;width:40px;text-align:center;">30</div>
<div class="t" style="left:613px;top:272.84px;font-size:12px;line-height:14px;color:#000;width:40px;text-align:center;">31</div>
<div class="t" style="left:638px;top:272.84px;font-size:12px;line-height:14px;color:#808080;width:40px;text-align:center;">1</div>
<div class="t" style="left:488px;top:287.84px;font-size:12px;line-height:14px;color:#808080;width:40px;text-align:center;">2</div>
<div class="t" style="left:513px;top:287.84px;font-size:12px;line-height:14px;color:#808080;width:40px;text-align:center;">3</div>
<div class="t" style="left:538px;top:287.84px;font-size:12px;line-height:14px;color:#808080;width:40px;text-align:center;">4</div>
<div class="t" style="left:563px;top:287.84px;font-size:12px;line-height:14px;color:#808080;width:40px;text-align:center;">5</div>
<div class="t" style="left:588px;top:287.84px;font-size:12px;line-height:14px;color:#808080;width:40px;text-align:center;">6</div>
<div class="t" style="left:613px;top:287.84px;font-size:12px;line-height:14px;color:#808080;width:40px;text-align:center;">7</div>
<div class="t" style="left:638px;top:287.84px;font-size:12px;line-height:14px;color:#808080;width:40px;text-align:center;">8</div>
<div class="t" style="left:525px;top:304.00px;font-size:13px;line-height:15px;color:#000;font-weight:700;">Today: 5/13/2002</div>
<div class="t" style="left:528px;top:321.15px;font-size:14px;line-height:16px;color:#fff;font-weight:700;">Aufführungsperiode</div>
<div style="position:absolute;left:555px;top:343px;width:73px;height:24px;background:#fff;box-shadow: inset -1px -1px #fff, inset 1px 1px #808080, inset -2px -2px #dfdfdf, inset 2px 2px #000;"></div>
<div class="t" style="left:557px;top:344.84px;font-size:12px;line-height:14px;color:#000;">100</div>
<div class="t" style="left:642px;top:349.30px;font-size:15px;line-height:17px;color:#fff;font-weight:700;letter-spacing:0.6px;">Tage</div>
<div style="position:absolute;left:522px;top:377px;width:12px;height:12px;background:#fff;box-shadow: inset -1px -1px #fff, inset 1px 1px #808080, inset -2px -2px #dfdfdf, inset 2px 2px #000;"></div>
<svg width="728" height="457"><path d="M524.5 382.5 l2.5 2.5 l4.5 -5" fill="none" stroke="#000" stroke-width="1.8"/></svg>
<div class="t" style="left:539px;top:375.69px;font-size:11px;line-height:13px;color:#000;letter-spacing:-0.1px;">Datieren Sie Rechner</div>
<div class="t" style="left:45px;top:366.69px;font-size:11px;line-height:13px;color:#000040;width:80px;text-align:center;">Datum</div>
<div class="t" style="left:135px;top:366.69px;font-size:11px;line-height:13px;color:#000040;width:60px;text-align:center;">Tage</div>
<div class="t" style="left:201px;top:366.69px;font-size:11px;line-height:13px;color:#000040;width:80px;text-align:center;">Datum</div>
<div style="position:absolute;left:36px;top:379px;width:89px;height:27px;background:#fff;box-shadow: inset -1px -1px #fff, inset 1px 1px #808080, inset -2px -2px #dfdfdf, inset 2px 2px #000;"></div>
<div style="position:absolute;left:132px;top:379px;width:58px;height:27px;background:#fff;box-shadow: inset -1px -1px #fff, inset 1px 1px #808080, inset -2px -2px #dfdfdf, inset 2px 2px #000;"></div>
<div style="position:absolute;left:196px;top:379px;width:82px;height:27px;background:#fff;box-shadow: inset -1px -1px #fff, inset 1px 1px #808080, inset -2px -2px #dfdfdf, inset 2px 2px #000;"></div>
<div style="position:absolute;left:284px;top:379px;width:81px;height:27px;background:#000;"></div>
<div style="position:absolute;left:285px;top:380px;width:79px;height:25px;background:#c0c0c0;box-shadow: inset -1px -1px #000, inset 1px 1px #fff, inset -2px -2px #808080, inset 2px 2px #dfdfdf;"></div>
<svg width="728" height="457" shape-rendering="crispEdges"><rect x="292.5" y="383.5" width="65" height="17" fill="none" stroke="#000" stroke-dasharray="1 1"/></svg>
<div class="t" style="left:285px;top:385.52px;font-size:11.5px;line-height:13px;color:#000;letter-spacing:-0.3px;width:79px;text-align:center;">Rechnen Sie</div>
<svg width="728" height="457">
<defs>
<clipPath id="usa"><path d="M9 434 H35 L37 432.5 L39.5 434 V436.5 L37.5 438.5 L36 441 L33.5 443 V447 L32.5 448.5 L30.5 445.5 H27.5 L25.5 449.5 H23 L21 446.5 L17 445.5 L13 443.5 L10 442.5 L8.5 439 Z"/></clipPath>
<clipPath id="ger"><path d="M56 431 H62 L64 432 H68 L69 434 L70 437 L69 439 L71 441 L72 442 L70.5 444 L71.5 447 L69.5 450.5 L67 451.5 H58 L55 450.5 L54 448.5 L55 446.5 L52.5 444.5 L51 442 V439 L53 436 L54.5 435 L55 433 Z"/></clipPath>
</defs>
<g clip-path="url(#usa)" shape-rendering="crispEdges">
<rect x="8" y="432" width="33" height="18" fill="#fff"/>
<rect x="8" y="437" width="33" height="2" fill="#e00000"/>
<rect x="8" y="441" width="33" height="2" fill="#e00000"/>
<rect x="8" y="445" width="33" height="2" fill="#e00000"/>
<rect x="8" y="448" width="33" height="2" fill="#e00000"/>
<rect x="8" y="432" width="13" height="8" fill="#0000a0"/>
<rect x="10" y="435" width="1" height="1" fill="#fff"/><rect x="12" y="435" width="1" height="1" fill="#fff"/><rect x="14" y="435" width="1" height="1" fill="#fff"/><rect x="16" y="435" width="1" height="1" fill="#fff"/><rect x="18" y="435" width="1" height="1" fill="#fff"/>
<rect x="11" y="437" width="1" height="1" fill="#fff"/><rect x="13" y="437" width="1" height="1" fill="#fff"/><rect x="15" y="437" width="1" height="1" fill="#fff"/><rect x="17" y="437" width="1" height="1" fill="#fff"/><rect x="19" y="437" width="1" height="1" fill="#fff"/>
</g>
<g clip-path="url(#ger)" shape-rendering="crispEdges">
<rect x="50" y="430" width="24" height="8" fill="#000"/>
<rect x="50" y="438" width="24" height="6" fill="#e00000"/>
<rect x="50" y="444" width="24" height="9" fill="#ffe000"/>
<rect x="50" y="450" width="24" height="3" fill="#000"/>
</g>
</svg>
<svg width="728" height="457" shape-rendering="crispEdges">
<path d="M711.5 453 L723 441.5 M715.5 453 L723 445.5 M719.5 453 L723 449.5" stroke="#fff" fill="none" shape-rendering="auto"/>
<path d="M712.5 453 L723 442.5 M713.5 453 L723 443.5 M716.5 453 L723 446.5 M717.5 453 L723 447.5 M720.5 453 L723 450.5 M721.5 453 L723 451.5" stroke="#808080" fill="none" shape-rendering="auto"/>
</svg>
<div class="t" style="left:87px;top:435.69px;font-size:11px;line-height:13px;color:#000;">3:40 PM</div>
<div class="t" style="left:155px;top:435.69px;font-size:11px;line-height:13px;color:#000;letter-spacing:0.3px;">5/13/2002</div>
<div class="t" style="left:218px;top:435.69px;font-size:11px;line-height:13px;color:#000;">FE1234</div>
<div class="t" style="left:316px;top:435.69px;font-size:11px;line-height:13px;color:#000;">Barracks Renovation</div>
</body></html>
